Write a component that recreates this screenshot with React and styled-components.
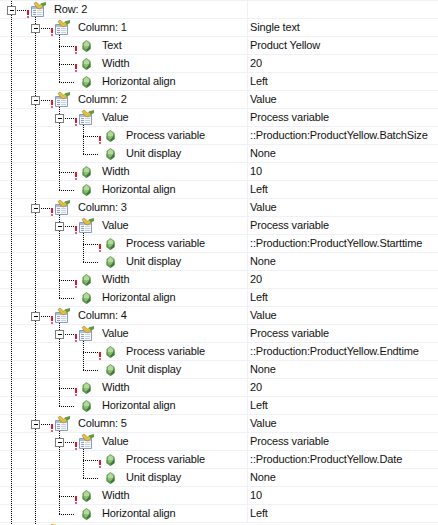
import React from 'react';
import styled, { createGlobalStyle } from 'styled-components';

const Global = createGlobalStyle`
  html, body { margin: 0; padding: 0; background: #fff; overflow: hidden; }
`;

const Tree = styled.div`
  width: 438px;
  height: 525px;
  overflow: hidden;
  box-sizing: border-box;
  border-top: 1px solid #f0f0f8;
  font-family: "Liberation Sans", Arial, sans-serif;
  font-size: 11px;
  letter-spacing: -0.15px;
  color: #111;
  display: flex;
  flex-direction: column;
`;

const RowWrap = styled.div`
  display: flex;
  flex: 0 0 18px;
  height: 18px;
  box-sizing: border-box;
  border-bottom: 1px solid #f0f0f8;
`;

const NameCell = styled.div`
  flex: 0 0 248px;
  display: flex;
  align-items: stretch;
  border-right: 1px solid #f0f0f8;
  box-sizing: border-box;
`;

const ValueCell = styled.div`
  flex: 1;
  padding-left: 2px;
  line-height: 17px;
  white-space: nowrap;
`;

const Label = styled.span`
  margin-left: 8px;
  line-height: 17px;
  white-space: nowrap;
`;

const GuideSvg = styled.svg`
  display: block;
  flex: none;
`;

const TailSvg = styled.svg`
  display: block;
  flex: none;
`;

const Dots = ({ x, y1, y2 }) => (
  <line x1={x + 0.5} x2={x + 0.5} y1={y1} y2={y2} stroke="#000" strokeDasharray="1 1" />
);

const Guides = ({ level, through, last, hasBox, flag }) => {
  const cx = 11 + 24 * level;
  const w = cx + 19;
  return (
    <GuideSvg width={w} height="18" viewBox={`0 0 ${w} 18`}>
      {through.map((l) => <Dots key={l} x={11 + 24 * l} y1={0} y2={18} />)}
      <Dots x={cx} y1={0} y2={last ? 9 : 18} />
      <line x1={cx} x2={cx + 15} y1="9.5" y2="9.5" stroke="#000" strokeDasharray="1 1" />
      {hasBox && (
        <g>
          <rect x={cx - 3.5} y="5.5" width="8" height="8" fill="#fff" stroke="#7c7c7c" />
          <line x1={cx - 1} x2={cx + 3} y1="9.5" y2="9.5" stroke="#000" />
        </g>
      )}
      {flag && (
        <g fill="#d8182c">
          <rect x={cx + 16} y="9" width="2" height="5" />
          <rect x={cx + 16} y="15" width="2" height="2" fill="#e06070" />
        </g>
      )}
    </GuideSvg>
  );
};

const IconSlot = styled.span`
  flex: none;
  width: 16px;
  height: 18px;
  display: flex;
  justify-content: center;
`;

const FolderIcon = () => (
  <svg width="16" height="18" viewBox="0 0 16 18">
    <path d="M1.5 5.5h12v10h-12z" fill="#f6f8fc" stroke="#8c9ab4" />
    <rect x="2" y="6" width="11" height="2" fill="#a9bde0" />
    <path d="M3 9.5h3M3 11.5h3M3 13.5h3" stroke="#8aa0c8" />
    <path d="M7 9.5h5M7 11.5h5M7 13.5h5" stroke="#c6d0e4" />
    <path d="M4 2.5L6 1l3.5 3L12 3l1 2.5-3 2.5-3-1z" fill="#e4c040" stroke="#8a7420" strokeWidth="0.5" />
    <path d="M10.5 2.5L16 1v3l-3 1.5z" fill="#5f9a3e" />
    <line x1="5.5" y1="16" x2="5.5" y2="18" stroke="#000" strokeDasharray="1 1" />
  </svg>
);

const GemIcon = () => (
  <svg width="9" height="18" viewBox="0 0 9 18">
    <path d="M4.5 3L8.5 6v6l-4 3-4-3V6Z" fill="#6fa65a" />
    <path d="M4.5 4L7 6.2V9H2V6.2Z" fill="#b6d8a0" />
    <path d="M2 9h5l-1 3H3Z" fill="#8cc076" />
    <path d="M8.5 7v5l-4 3v-3l1.5-1Z" fill="#3f7a38" />
    <path d="M0.5 8v4l4 3v-1.5L2 11Z" fill="#5c9650" />
  </svg>
);

const prop = (level, through, name, value, opts = {}) => ({ level, through, name, value, ...opts });

const rows = [
  { level: 0, through: [], name: 'Row: 2', value: '', hasBox: true, flag: true, kind: 'f' },
  { level: 1, through: [0], name: 'Column: 1', value: 'Single text', hasBox: true, flag: true, kind: 'f' },
  prop(2, [0, 1], 'Text', 'Product Yellow', { flag: true }),
  prop(2, [0, 1], 'Width', '20', { flag: true }),
  prop(2, [0, 1], 'Horizontal align', 'Left', { last: true }),
];

[
  [2, 'BatchSize', '10'],
  [3, 'Starttime', '20'],
  [4, 'Endtime', '20'],
  [5, 'Date', '10'],
].forEach(([n, tag, width]) => {
  rows.push({ level: 1, through: [0], name: `Column: ${n}`, value: 'Value', hasBox: true, flag: true, kind: 'f' });
  rows.push({ level: 2, through: [0, 1], name: 'Value', value: 'Process variable', hasBox: true, flag: true, kind: 'f' });
  rows.push(prop(3, [0, 1, 2], 'Process variable', `::Production:ProductYellow.${tag}`, { flag: true }));
  rows.push(prop(3, [0, 1, 2], 'Unit display', 'None', { last: true }));
  rows.push(prop(2, [0, 1], 'Width', width, { flag: true }));
  rows.push(prop(2, [0, 1], 'Horizontal align', 'Left', { last: true }));
});

export default function App() {
  return (
    <Tree>
      <Global />
      {rows.map((r, i) => (
        <RowWrap key={i}>
          <NameCell>
            <Guides {...r} />
            <IconSlot>{r.kind === 'f' ? <FolderIcon /> : <GemIcon />}</IconSlot>
            <Label>{r.name}</Label>
          </NameCell>
          <ValueCell>{r.value}</ValueCell>
        </RowWrap>
      ))}
      <TailSvg width="60" height="2" viewBox="0 0 60 2">
        <Dots x={11} y1={0} y2={2} />
        <Dots x={35} y1={0} y2={2} />
        <rect x="51" y="1" width="2" height="1" fill="#e8a030" />
        <rect x="53" y="1" width="3" height="1" fill="#f4e070" />
      </TailSvg>
    </Tree>
  );
}
